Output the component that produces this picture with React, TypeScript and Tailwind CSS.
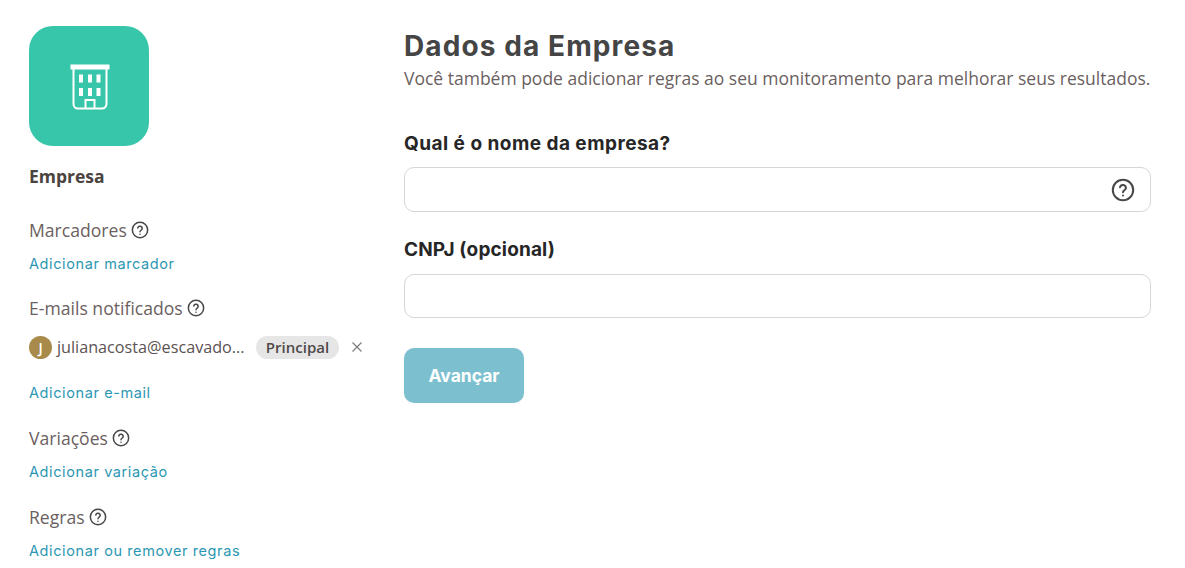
const heading = { fontFamily: '"Inter", "Liberation Sans", sans-serif' };

const HelpIcon = ({ size = 18 }: { size?: number }) => (
  <svg width={size} height={size} viewBox="0 0 24 24" fill="none" stroke="#484848" strokeWidth="2" strokeLinecap="round" strokeLinejoin="round">
    <circle cx="12" cy="12" r="10.2" />
    <path d="M9 9.3a3 3 0 0 1 5.9.8c0 2-2.9 2.4-2.9 4.1" />
    <path d="M12 17.6h.01" />
  </svg>
);

const BuildingIcon = () => (
  <svg className="ml-[1px] mt-[1px]" width="40" height="46" viewBox="0 0 40 46" fill="none">
    <rect x="0.5" y="0.5" width="39" height="5" fill="#fff" />
    <path d="M3.5 5v35a4.5 4.5 0 0 0 4.5 4.5h24a4.5 4.5 0 0 0 4.5-4.5V5" stroke="#fff" strokeWidth="2" />
    <path d="M15.5 45V36h9v9" stroke="#fff" strokeWidth="2" />
    <rect x="9" y="10.5" width="4" height="8" fill="#fff" />
    <rect x="18" y="10.5" width="4" height="8" fill="#fff" />
    <rect x="26.5" y="10.5" width="4" height="8" fill="#fff" />
    <rect x="9" y="24" width="4" height="8" fill="#fff" />
    <rect x="18" y="24" width="4" height="8" fill="#fff" />
    <rect x="26.5" y="24" width="4" height="8" fill="#fff" />
  </svg>
);

const SectionTitle = ({ children }: { children: string }) => (
  <div className="flex items-center gap-[4px] h-6 text-[17.6px] text-[#6b5f5f]">
    <span>{children}</span>
    <HelpIcon />
  </div>
);

const AddLink = ({ children }: { children: string }) => (
  <a className="block h-5 leading-5 text-[14.5px] font-normal tracking-[0.6px] text-[#2b97b3]" style={heading}>
    {children}
  </a>
);

export default function App() {
  return (
    <div className="flex h-[568px] w-[1185px] overflow-hidden bg-white pl-[29px] pt-[26px] text-[#6b5f5f]" style={{ fontFamily: '"Open Sans", sans-serif' }}>
      <aside className="flex w-[375px] shrink-0 flex-col">
        <div className="flex h-[120px] w-[120px] items-center justify-center rounded-[24px] bg-[#38c6aa]">
          <BuildingIcon />
        </div>
        <div className="mt-[18px] h-[24px] text-[17.5px] font-bold leading-[24px] text-[#4a4340]">Empresa</div>

        <div className="mt-[30px]">
          <SectionTitle>Marcadores</SectionTitle>
          <div className="mt-[12px]">
            <AddLink>Adicionar marcador</AddLink>
          </div>
        </div>

        <div className="mt-[22px]">
          <SectionTitle>E-mails notificados</SectionTitle>
          <div className="mt-[15px] flex h-[24px] items-center">
            <span className="flex h-[23px] w-[23px] items-center justify-center rounded-full bg-[#a88a4a] text-[14px] font-semibold text-white">J</span>
            <span className="ml-[5px] w-[199px] whitespace-nowrap text-[16.2px] text-[#5c5252]">julianacosta@escavado...</span>
            <span className="flex h-[23px] w-[83px] items-center justify-center rounded-full bg-[#e6e6e6] text-[15px] font-semibold text-[#4f4a4a]">Principal</span>
            <svg className="ml-[12px]" width="12" height="12" viewBox="0 0 12 12" fill="none" stroke="#7d7d7d" strokeWidth="1.2">
              <path d="M1.5 1.5l9 9M10.5 1.5l-9 9" />
            </svg>
          </div>
          <div className="mt-[24px]">
            <AddLink>Adicionar e-mail</AddLink>
          </div>
        </div>

        <div className="mt-[23px]">
          <SectionTitle>Variações</SectionTitle>
          <div className="mt-[12px]">
            <AddLink>Adicionar variação</AddLink>
          </div>
        </div>

        <div className="mt-[23px]">
          <SectionTitle>Regras</SectionTitle>
          <div className="mt-[12px]">
            <AddLink>Adicionar ou remover regras</AddLink>
          </div>
        </div>
      </aside>

      <main className="w-[747px] shrink-0">
        <h1 className="mt-[1px] h-[38px] text-[28px] font-bold leading-[38px] tracking-[1.1px] text-[#454545]" style={heading}>Dados da Empresa</h1>
        <p className="h-[26px] whitespace-nowrap text-[17.5px] leading-[26px] text-[#6b5f5f]">Você também pode adicionar regras ao seu monitoramento para melhorar seus resultados.</p>

        <label className="mt-[41px] block h-[24px] text-[19px] font-bold leading-[24px] tracking-[0.47px] text-[#262626]" style={heading}>Qual é o nome da empresa?</label>
        <div className="mt-[11px] flex h-[45px] items-center justify-end rounded-[10px] border border-[#d6d6d6] pr-[15px]">
          <HelpIcon size={24} />
        </div>

        <label className="mt-[26px] block h-[24px] text-[19px] font-bold leading-[24px] tracking-[0.15px] text-[#262626]" style={heading}>CNPJ (opcional)</label>
        <div className="mt-[12px] h-[44px] rounded-[10px] border border-[#d6d6d6]" />

        <button className="mt-[30px] flex h-[55px] w-[120px] items-center justify-center rounded-[10px] bg-[#7cbfcf] pt-[1px] text-[17.5px] font-bold text-white" style={heading}>Avançar</button>
      </main>
    </div>
  );
}
